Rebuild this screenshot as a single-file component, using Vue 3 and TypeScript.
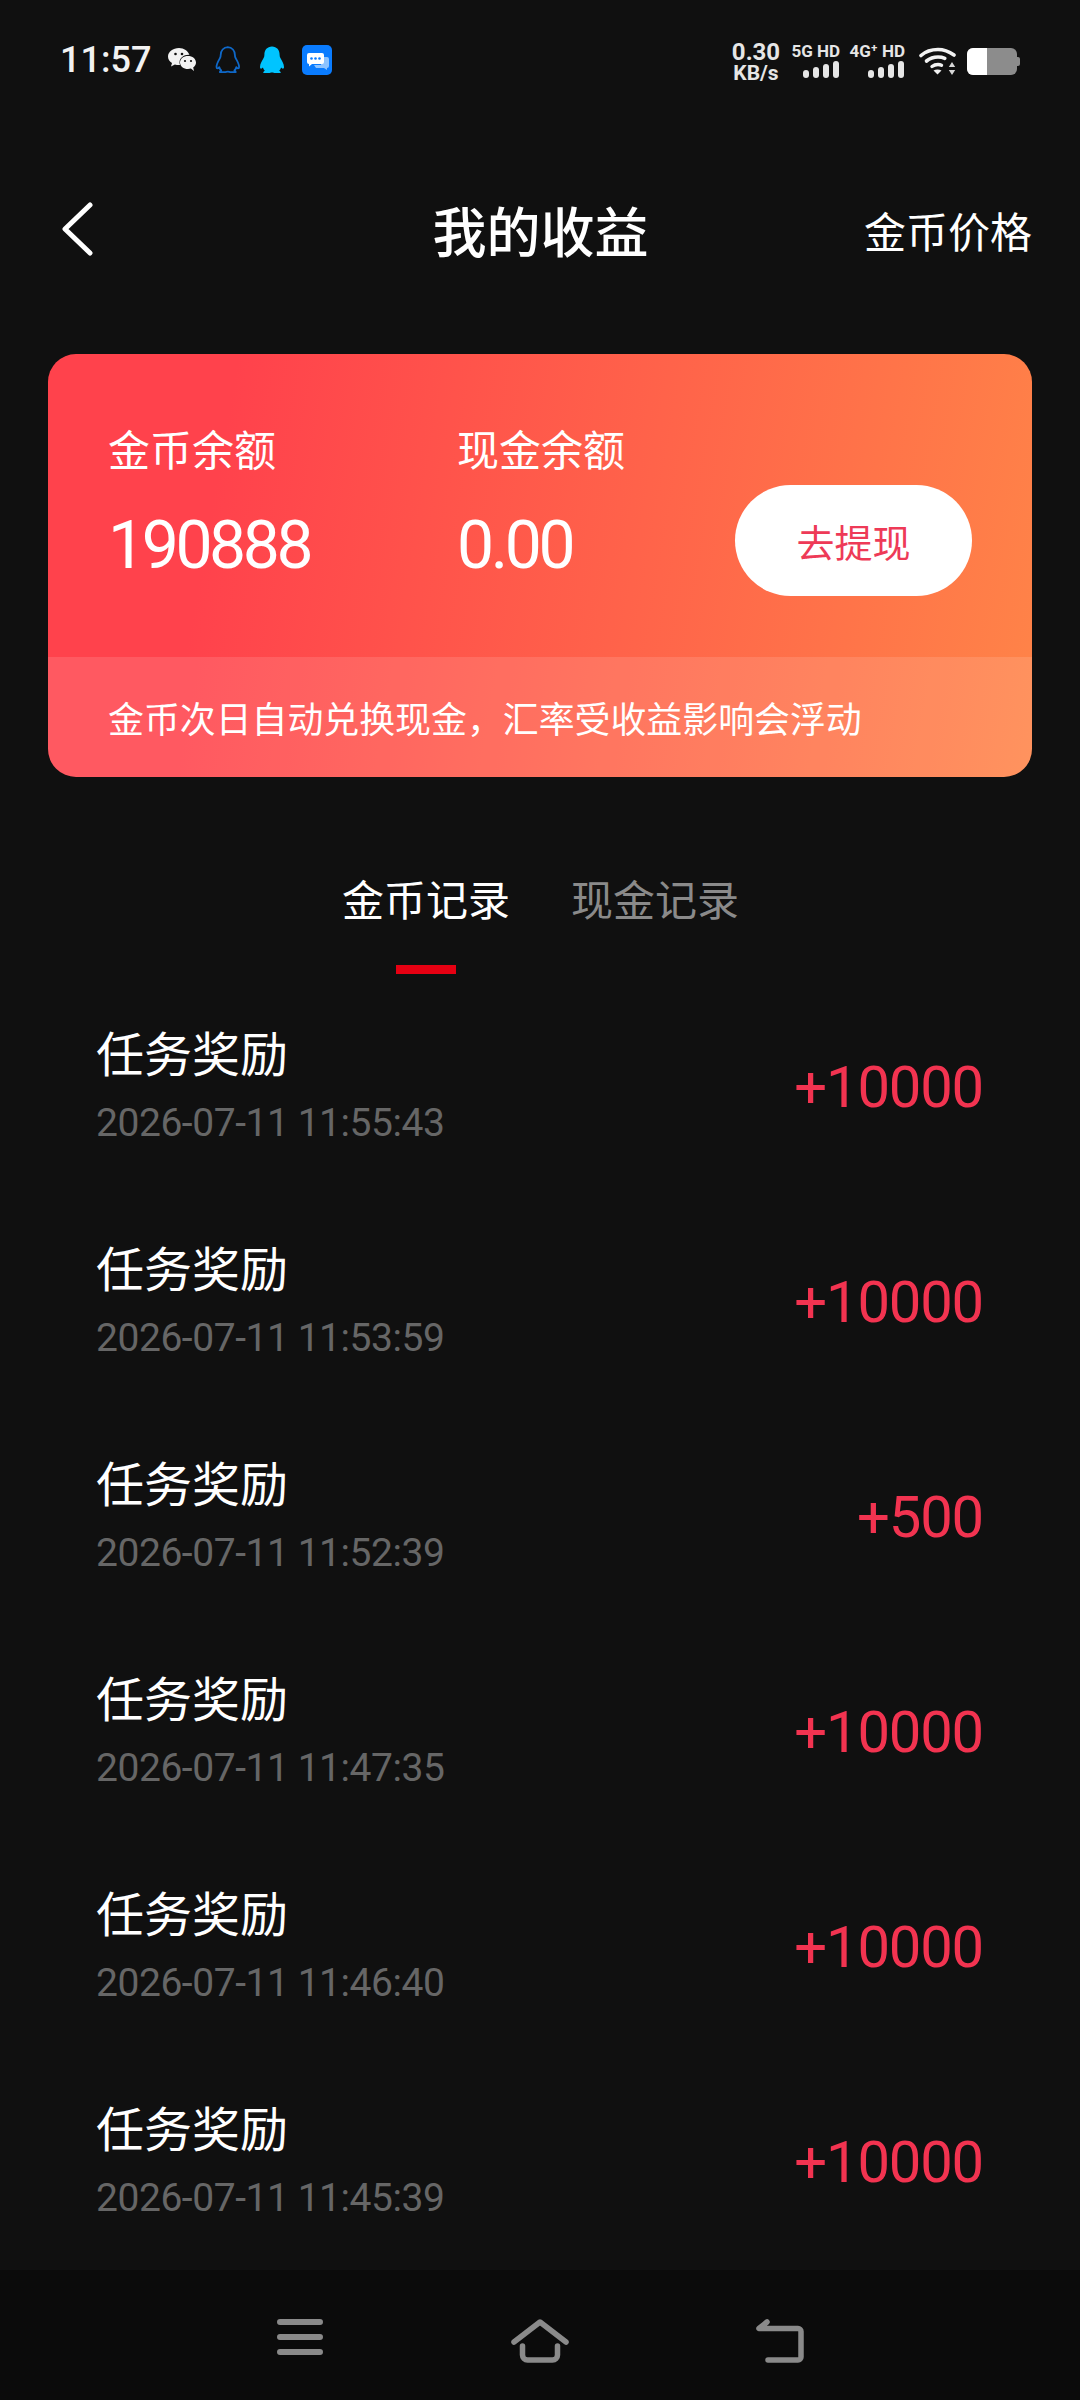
<template>
  <div class="page">
    <div class="status">
      <span class="time">11:57</span>
      <svg class="ic wechat" viewBox="0 0 28 24" width="28" height="24">
        <path d="M11 0C5 0 0 3.700 0 8.500c0 2.700 1.500 5 4 6.600L3 18.500l3.900-2c1.300.4 2.600.6 4.100.6l1-.1c-.3-.8-.5-1.600-.5-2.500C11.500 10 15.700 6.800 20.500 6.800l.9.100C20.200 2.900 16 0 11 0z" fill="#f2f2f2" />
        <path d="M28 14.500C28 10.700 24.400 8 20 8s-8 2.700-8 6.500 3.600 6.500 8 6.500c1 0 2-.2 2.900-.5L26 23l-.8-3.500c1.700-1.200 2.800-3 2.800-5z" fill="#f2f2f2" />
        <circle cx="7.500" cy="6" r="1.300" fill="#101010" />
        <circle cx="14" cy="6" r="1.300" fill="#101010" />
        <circle cx="17" cy="13" r="1.100" fill="#101010" />
        <circle cx="23" cy="13" r="1.100" fill="#101010" />
      </svg>
      <svg class="ic qq-line" viewBox="0 0 26 28" width="26" height="28">
        <path d="M13 1.200c-4.600 0-7.300 3.500-7.300 7.800 0 1.200-.2 2.300-.8 3.300-1.300 2.300-3.400 5.700-3.400 8.600 0 1.100.4 1.500 1 1.500.6 0 1.200-.5 1.800-1.200.3 1.300 1 2.400 1.900 3.300-1.100.5-1.500 1.100-1.400 1.700h5.200c.9 0 1.700-.6 2.800-.6s1.900.6 2.800.6h5.200c.1-.6-.3-1.200-1.400-1.700.9-.9 1.600-2 1.900-3.300.6.700 1.200 1.200 1.800 1.200.6 0 1-.4 1-1.500 0-2.900-2.100-6.300-3.400-8.600-.6-1-.8-2.100-.8-3.300 0-4.300-2.700-7.800-7.300-7.800z" fill="none" stroke="#0f68c8" stroke-width="1.800" stroke-linejoin="round" />
      </svg>
      <svg class="ic qq-fill" viewBox="0 0 26 28" width="26" height="28">
        <path d="M13 .5c-4.800 0-7.600 3.600-7.600 8.200 0 1.200-.2 2.300-.8 3.400C3.300 14.400 1 18 1 21c0 1.200.4 1.700 1.100 1.700.6 0 1.200-.5 1.800-1.200.3 1.300 1 2.400 1.900 3.300-1.100.5-1.600 1.200-1.500 2.200h5.600c1 0 1.900-.6 3.100-.6s2.100.6 3.100.6h5.600c.1-1-.4-1.700-1.500-2.200.9-.9 1.600-2 1.900-3.300.6.700 1.200 1.200 1.800 1.200.7 0 1.100-.5 1.100-1.700 0-3-2.300-6.600-3.600-8.900-.6-1.100-.8-2.200-.8-3.400C20.600 4.100 17.800.500 13 .5z" fill="#00c4ff" />
      </svg>
      <svg class="ic msg" viewBox="0 0 30 30" width="30" height="30">
        <rect width="30" height="30" rx="5" fill="#0a7cff" />
        <path d="M19 12h6a2 2 0 0 1 2 2v7a2 2 0 0 1-2 2v2l-3-2h-8l-2-3h7z" fill="#8dc3ff" />
        <path d="M7 8h13a2 2 0 0 1 2 2v7a2 2 0 0 1-2 2H10l-3 2.500V19a2 2 0 0 1-2-2v-7a2 2 0 0 1 2-2z" fill="#fff" />
        <circle cx="9.500" cy="13.500" r="1.300" fill="#0a7cff" />
        <circle cx="13.500" cy="13.500" r="1.300" fill="#0a7cff" />
        <circle cx="17.500" cy="13.500" r="1.300" fill="#0a7cff" />
      </svg>
      <div class="spacer"></div>
      <div class="speed">
        <span class="speed-num">0.30</span>
        <span class="speed-unit">KB/s</span>
      </div>
      <div class="net net-5g">
        <span class="net-label">5G HD</span>
        <div class="bars">
          <i v-for="h in barHeights" :key="h" :style="{ height: h + 'px' }"></i>
        </div>
      </div>
      <div class="net net-4g">
        <span class="net-label">4G⁺ HD</span>
        <div class="bars">
          <i v-for="h in barHeights" :key="h" :style="{ height: h + 'px' }"></i>
        </div>
      </div>
      <svg class="wifi" viewBox="0 0 38 30" width="38" height="30">
        <path d="M2 9.500C6.500 5.500 12 3.500 19 3.500s11 2 16 5.500" fill="none" stroke="#f2f2f2" stroke-width="3.600" stroke-linecap="round" />
        <path d="M7.500 15c3.300-2.700 7-4 11.500-4 2.500 0 4.700.4 6.800 1.300" fill="none" stroke="#f2f2f2" stroke-width="3.600" stroke-linecap="round" />
        <path d="M13 20.500c1.700-1.300 3.700-2 6-2 1.300 0 2.400.2 3.500.7" fill="none" stroke="#f2f2f2" stroke-width="3.400" stroke-linecap="round" />
        <path d="M18.500 28.500l-4-4c2.500-1.500 5.500-1.500 8 0z" fill="#f2f2f2" />
        <path d="M33 16l3.200 5h-6.400zM33 29l-3.200-5h6.400z" fill="#d8d8d8" />
      </svg>
      <div class="battery">
        <div class="battery-level"></div>
        <div class="battery-nub"></div>
      </div>
    </div>

    <header class="topbar">
      <button class="back" aria-label="返回">
        <svg viewBox="0 0 32 54" width="32" height="54">
          <path d="M29 3 4 27l25 24" fill="none" stroke="#fff" stroke-width="5" stroke-linecap="round" stroke-linejoin="round" />
        </svg>
      </button>
      <h1 class="title">我的收益</h1>
      <span class="price-link">金币价格</span>
    </header>

    <section class="card">
      <div class="card-main">
        <div class="balance balance-coin">
          <span class="balance-label">金币余额</span>
          <span class="balance-value">190888</span>
        </div>
        <div class="balance balance-cash">
          <span class="balance-label">现金余额</span>
          <span class="balance-value">0.00</span>
        </div>
        <button class="withdraw">去提现</button>
      </div>
      <div class="card-note">金币次日自动兑换现金，汇率受收益影响会浮动</div>
    </section>

    <nav class="tabs">
      <span class="tab active">金币记录</span>
      <span class="tab">现金记录</span>
    </nav>

    <ul class="records">
      <li v-for="r in records" :key="r.time" class="record">
        <div class="record-info">
          <span class="record-name">任务奖励</span>
          <span class="record-time">{{ r.time }}</span>
        </div>
        <span class="record-amount">{{ r.amount }}</span>
      </li>
    </ul>

    <footer class="navbar">
      <svg viewBox="0 0 46 36" width="46" height="36">
        <path d="M3 3h40M3 18h40M3 33h40" fill="none" stroke="#8a8a8a" stroke-width="6" stroke-linecap="round" />
      </svg>
      <svg viewBox="0 0 58 44" width="58" height="44">
        <path d="M3 23 29 3l26 20" fill="none" stroke="#8a8a8a" stroke-width="5.500" stroke-linecap="round" stroke-linejoin="round" />
        <path d="M11.500 27v9a5 5 0 0 0 5 5h25a5 5 0 0 0 5-5v-9" fill="none" stroke="#8a8a8a" stroke-width="5.500" stroke-linecap="round" />
      </svg>
      <svg viewBox="0 0 48 44" width="48" height="44">
        <path d="M11 3 3 9.500h39a3 3 0 0 1 3 3V38a3 3 0 0 1-3 3H12" fill="none" stroke="#8a8a8a" stroke-width="5.500" stroke-linecap="round" stroke-linejoin="round" />
      </svg>
    </footer>
  </div>
</template>

<script setup lang="ts">
interface RecordRow {
  time: string
  amount: string
}

const barHeights = [8, 11, 14, 17]

const records: RecordRow[] = [
  { time: '2026-07-11 11:55:43', amount: '+10000' },
  { time: '2026-07-11 11:53:59', amount: '+10000' },
  { time: '2026-07-11 11:52:39', amount: '+500' },
  { time: '2026-07-11 11:47:35', amount: '+10000' },
  { time: '2026-07-11 11:46:40', amount: '+10000' },
  { time: '2026-07-11 11:45:39', amount: '+10000' }
]
</script>

<style>
html,
body {
  margin: 0;
  background: #101010;
}
</style>

<style scoped>
.page {
  width: 1080px;
  height: 2400px;
  overflow: hidden;
  display: flex;
  flex-direction: column;
  background: #101010;
  color: #fff;
  font-family: Roboto, "Noto Sans CJK SC", sans-serif;
}

/* status bar */
.status {
  height: 120px;
  box-sizing: border-box;
  padding: 42px 63px 0 60px;
  display: flex;
  align-items: flex-start;
}
.time {
  font-size: 36px;
  font-weight: 500;
  line-height: 36px;
  color: #f2f2f2;
  width: 108px;
}
.ic {
  flex: none;
}
.wechat {
  margin-top: 6px;
}
.qq-line {
  margin: 4px 0 0 19px;
}
.qq-fill {
  margin: 4px 0 0 18px;
}
.msg {
  margin: 3px 0 0 17px;
}
.spacer {
  flex: 1;
}
.speed {
  width: 50px;
  display: flex;
  flex-direction: column;
  align-items: center;
  color: #e6e6e6;
  font-weight: 700;
}
.speed-num {
  font-size: 24px;
  line-height: 21px;
}
.speed-unit {
  font-size: 21px;
  line-height: 20px;
}
.net {
  display: flex;
  flex-direction: column;
  align-items: flex-end;
  color: #e6e6e6;
}
.net-5g {
  width: 50px;
  margin-left: 9px;
}
.net-4g {
  width: 57px;
  margin-left: 8px;
}
.net-label {
  font-size: 17px;
  font-weight: 700;
  line-height: 18px;
  white-space: nowrap;
}
.bars {
  margin-top: 1px;
  height: 17px;
  display: flex;
  align-items: flex-end;
  gap: 4px;
  padding-right: 1px;
}
.bars i {
  width: 6px;
  border-radius: 3px;
  background: #e6e6e6;
}
.wifi {
  margin: 4px 0 0 14px;
}
.battery {
  margin: 6px 0 0 10px;
  position: relative;
  width: 50px;
  height: 27px;
  border-radius: 6px;
  overflow: visible;
  background: #8c8c8c;
}
.battery-level {
  width: 20px;
  height: 100%;
  border-radius: 6px 0 0 6px;
  background: #fff;
}
.battery-nub {
  position: absolute;
  right: -3px;
  top: 9px;
  width: 3px;
  height: 9px;
  border-radius: 0 2px 2px 0;
  background: #8c8c8c;
}

/* top bar */
.topbar {
  height: 224px;
  box-sizing: border-box;
  padding: 0 48px 6px 61px;
  display: flex;
  align-items: center;
}
.back {
  padding: 0;
  border: 0;
  background: none;
  display: flex;
  line-height: 0;
}
.title {
  margin: 0;
  flex: 1;
  text-align: center;
  font-size: 54px;
  font-weight: 500;
  color: #fff;
  padding-left: 124px;
}
.price-link {
  font-size: 42px;
  color: #fff;
}

/* balance card */
.card {
  margin: 10px 48px 0;
  height: 423px;
  border-radius: 28px;
  overflow: hidden;
  display: flex;
  flex-direction: column;
  background: linear-gradient(100deg, #ff424c 18%, #ff8448 100%);
}
.card-main {
  height: 303px;
  box-sizing: border-box;
  padding: 0 60px;
  display: flex;
  align-items: center;
}
.balance {
  display: flex;
  flex-direction: column;
  padding-bottom: 6px;
}
.balance-coin {
  width: 349px;
}
.balance-cash {
  flex: 1;
}
.balance-label {
  font-size: 42px;
  line-height: 60px;
}
.balance-value {
  margin-top: 26px;
  font-size: 66px;
  font-weight: 450;
  letter-spacing: -3.4px;
  line-height: 76px;
}
.withdraw {
  margin-top: 70px;
  width: 237px;
  height: 111px;
  border: 0;
  border-radius: 56px;
  background: #fff;
  color: #ee3a57;
  font-family: inherit;
  font-size: 38px;
}
.card-note {
  flex: 1;
  padding-left: 60px;
  display: flex;
  align-items: center;
  font-size: 35.9px;
  background: rgba(255, 255, 255, 0.12);
}

/* tabs */
.tabs {
  margin-top: 95px;
  height: 107px;
  display: flex;
  justify-content: center;
  gap: 61px;
  padding-left: 1px;
}
.tab {
  position: relative;
  font-size: 42px;
  line-height: 60px;
  color: #8a8a8a;
}
.tab.active {
  color: #fff;
}
.tab.active::after {
  content: "";
  position: absolute;
  left: 54px;
  top: 93px;
  width: 60px;
  height: 9px;
  background: #e60012;
}

/* records */
.records {
  margin: 0;
  padding: 0;
  list-style: none;
}
.record {
  height: 215px;
  box-sizing: border-box;
  padding: 0 97px 0 96px;
  display: flex;
  align-items: center;
  justify-content: space-between;
}
.record-info {
  display: flex;
  flex-direction: column;
}
.record-name {
  font-size: 48px;
  line-height: 60px;
  color: #fff;
}
.record-time {
  margin-top: 13px;
  font-size: 39px;
  letter-spacing: -0.45px;
  line-height: 48px;
  color: #666;
}
.record-amount {
  font-size: 58px;
  letter-spacing: -1.2px;
  color: #f23350;
}

/* android nav bar */
.navbar {
  position: absolute;
  left: 0;
  top: 2270px;
  width: 1080px;
  height: 130px;
  box-sizing: border-box;
  padding: 49px 276px 0 277px;
  display: flex;
  justify-content: space-between;
  align-items: flex-start;
  background: #0b0b0b;
}
</style>
